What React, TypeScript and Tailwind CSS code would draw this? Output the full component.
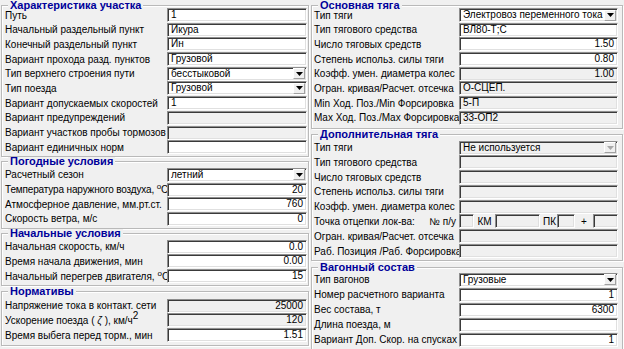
import React from 'react';
import clsx from 'clsx';

type Row =
  | { kind: 'edit'; label: React.ReactNode; value?: string; right?: boolean; gray?: boolean }
  | { kind: 'combo'; label: React.ReactNode; value: string; gray?: boolean }
  | { kind: 'point' };

// windows-ish small text, narrower than Arial 11px
const txt = 'text-[10px]';

const Field: React.FC<{ value?: string; right?: boolean; gray?: boolean; className?: string }> = ({
  value = '',
  right,
  gray,
  className
}) => (
  <div
    className={clsx(
      'flex h-[14px] shrink-0 items-center overflow-hidden whitespace-nowrap border border-t-[#8e8e8e] border-l-[#8e8e8e] border-r-white border-b-white px-[3px] leading-[12px] text-black shadow-[inset_1px_1px_0_#3a3a3a,inset_-1px_-1px_0_#e0e0e0]',
      txt,
      gray ? 'bg-[#f0f0f0]' : 'bg-white',
      right ? 'justify-end' : 'justify-start',
      className
    )}
  >
    {value}
  </div>
);

const Combo: React.FC<{ value: string; gray?: boolean; className?: string }> = ({ value, gray, className }) => (
  <div
    className={clsx(
      'flex h-[14px] shrink-0 items-center border border-t-[#8e8e8e] border-l-[#8e8e8e] border-r-white border-b-white pl-[3px] leading-[12px] text-black shadow-[inset_1px_1px_0_#3a3a3a,inset_-1px_-1px_0_#e0e0e0]',
      txt,
      gray ? 'bg-[#f0f0f0]' : 'bg-white',
      className
    )}
  >
    <span className="flex-1 overflow-hidden whitespace-nowrap">{value}</span>
    <div className="mr-[1px] flex h-[11px] w-[12px] items-center justify-center border border-t-white border-l-white border-r-[#a0a0a0] border-b-[#a0a0a0] bg-[#f0f0f0]">
      <svg width="7" height="4" viewBox="0 0 7 4">
        <path d="M0 0h7L3.5 4z" fill={gray ? '#a8a8a8' : '#000'} />
      </svg>
    </div>
  </div>
);

const Group: React.FC<{ title: string; className?: string; children: React.ReactNode }> = ({
  title,
  className,
  children
}) => (
  <div className={clsx('relative border border-[#b9b9b9] shadow-[inset_1px_1px_0_#fff,1px_1px_0_#fff]', className)}>
    {/* title sits over the etched line */}
    <span className="absolute -top-[5px] left-[6px] bg-[#f0f0f0] px-[2px] text-[11px] font-bold leading-[9px] text-[#00009a]">
      {title}
    </span>
    {children}
  </div>
);

const Rows: React.FC<{ rows: Row[]; labelW: string; fieldW: string; pitch: string; pl: string }> = ({
  rows,
  labelW,
  fieldW,
  pitch,
  pl
}) => (
  <>
    {rows.map((row, i) => {
      if (row.kind === 'point') {
        return (
          <div key={i} className={clsx('flex items-start', pitch, txt)}>
            <div className={clsx('flex h-[14px] shrink-0 items-center justify-between whitespace-nowrap pr-[3px]', labelW, pl)}>
              <span>Точка отцепки лок-ва:</span>
              <span>№ п/у</span>
            </div>
            <Field gray className="w-[15px]" />
            <span className="flex h-[14px] w-[21px] items-center justify-center">КМ</span>
            <Field gray className="w-[45px]" />
            <span className="flex h-[14px] w-[17px] items-center pl-[3px]">ПК</span>
            <Field gray className="w-[18px]" />
            <span className="flex h-[14px] w-[18px] items-center justify-center">+</span>
            <Field gray className="w-[25px]" />
          </div>
        );
      }
      return (
        <div key={i} className={clsx('flex items-start', pitch)}>
          <div className={clsx('flex h-[14px] shrink-0 items-center whitespace-nowrap', txt, labelW, pl)}>
            <span>{row.label}</span>
          </div>
          {row.kind === 'combo' ? (
            <Combo value={row.value} gray={row.gray} className={fieldW} />
          ) : (
            <Field value={row.value} right={row.right} gray={row.gray} className={fieldW} />
          )}
        </div>
      );
    })}
  </>
);

const deg = (
  <>
    <sup className="text-[8px]">o</sup>C
  </>
);

const App: React.FC = () => {
  const section: Row[] = [
    { kind: 'edit', label: 'Путь', value: '1' },
    { kind: 'edit', label: 'Начальный раздельный пункт', value: 'Икура' },
    { kind: 'edit', label: 'Конечный раздельный пункт', value: 'Ин' },
    { kind: 'edit', label: 'Вариант прохода разд. пунктов', value: 'Грузовой' },
    { kind: 'combo', label: 'Тип верхнего строения пути', value: 'бесстыковой' },
    { kind: 'combo', label: 'Тип поезда', value: 'Грузовой' },
    { kind: 'edit', label: 'Вариант допускаемых скоростей', value: '1' },
    { kind: 'edit', label: 'Вариант предупреждений', gray: true },
    { kind: 'edit', label: 'Вариант участков пробы тормозов', gray: true },
    { kind: 'edit', label: 'Вариант единичных норм' }
  ];
  const weather: Row[] = [
    { kind: 'combo', label: 'Расчетный сезон', value: 'летний' },
    {
      kind: 'edit',
      label: <span className="tracking-[-0.15px]">Температура наружного воздуха, {deg}</span>,
      value: '20',
      right: true
    },
    { kind: 'edit', label: 'Атмосферное давление, мм.рт.ст.', value: '760', right: true },
    { kind: 'edit', label: 'Скорость ветра, м/с', value: '0', right: true }
  ];
  const initial: Row[] = [
    { kind: 'edit', label: 'Начальная скорость, км/ч', value: '0.0', right: true },
    { kind: 'edit', label: 'Время начала движения, мин', value: '0.00', right: true },
    { kind: 'edit', label: <>Начальный перегрев двигателя, {deg}</>, value: '15', right: true }
  ];
  const norms: Row[] = [
    { kind: 'edit', label: 'Напряжение тока в контакт. сети', value: '25000', right: true, gray: true },
    {
      kind: 'edit',
      label: (
        <>
          Ускорение поезда ( <i>ζ</i> ), км/ч<sup className="text-[10px]">2</sup>
        </>
      ),
      value: '120',
      right: true,
      gray: true
    },
    { kind: 'edit', label: 'Время выбега перед торм., мин', value: '1.51', right: true }
  ];
  const mainTraction: Row[] = [
    { kind: 'combo', label: 'Тип тяги', value: 'Электровоз переменного тока' },
    { kind: 'edit', label: 'Тип тягового средства', value: 'ВЛ80-Т;С' },
    { kind: 'edit', label: 'Число тяговых средств', value: '1.50', right: true },
    { kind: 'edit', label: 'Степень использ. силы тяги', value: '0.80', right: true },
    { kind: 'edit', label: 'Коэфф. умен. диаметра колес', value: '1.00', right: true, gray: true },
    { kind: 'edit', label: 'Огран. кривая/Расчет. отсечка', value: 'О-СЦЕП.', gray: true },
    { kind: 'edit', label: 'Min Ход. Поз./Min Форсировка', value: '5-П', gray: true },
    { kind: 'edit', label: 'Max Ход. Поз./Max Форсировка', value: '33-ОП2', gray: true }
  ];
  const extraTraction: Row[] = [
    { kind: 'combo', label: 'Тип тяги', value: 'Не используется', gray: true },
    { kind: 'edit', label: 'Тип тягового средства', gray: true },
    { kind: 'edit', label: 'Число тяговых средств', gray: true },
    { kind: 'edit', label: 'Степень использ. силы тяги', gray: true },
    { kind: 'edit', label: 'Коэфф. умен. диаметра колес', gray: true },
    { kind: 'point' },
    { kind: 'edit', label: 'Огран. кривая/Расчет. отсечка', gray: true },
    { kind: 'edit', label: 'Раб. Позиция /Раб. Форсировка', gray: true }
  ];
  const wagons: Row[] = [
    { kind: 'combo', label: 'Тип вагонов', value: 'Грузовые' },
    { kind: 'edit', label: 'Номер расчетного варианта', value: '1', right: true },
    { kind: 'edit', label: 'Вес состава, т', value: '6300', right: true },
    { kind: 'edit', label: 'Длина поезда, м' },
    { kind: 'edit', label: 'Вариант Доп. Скор. на спусках', value: '1', right: true }
  ];

  const left = { labelW: 'w-[165px]', fieldW: 'w-[140px]', pl: 'pl-[3px]' };
  const right = { labelW: 'w-[147px]', fieldW: 'w-[159px]', pl: 'pl-[2px]' };

  return (
    <div
      className="flex h-[349px] w-[624px] overflow-hidden bg-[#f0f0f0] text-black"
      style={{ fontFamily: '"Liberation Sans", Arial, sans-serif' }}
    >
      <div className="flex w-[310px] shrink-0 flex-col">
        <Group title="Характеристика участка" className="ml-[1px] mt-[5px] w-[308px] pb-[1px] pt-[2px]">
          <Rows rows={section} pitch="h-[14.7px]" {...left} />
        </Group>
        <Group title="Погодные условия" className="ml-[1px] mt-[4px] w-[308px] pb-[1px] pt-[6px]">
          <Rows rows={weather} pitch="h-[14.7px]" {...left} />
        </Group>
        <Group title="Начальные условия" className="ml-[1px] mt-[4px] w-[308px] pb-[1px] pt-[6px]">
          <Rows rows={initial} pitch="h-[14.7px]" {...left} />
        </Group>
        <Group title="Нормативы" className="ml-[1px] mt-[5px] w-[308px] pb-[2px] pt-[7px]">
          <Rows rows={norms} pitch="h-[14.7px]" {...left} />
        </Group>
      </div>
      <div className="flex w-[314px] shrink-0 flex-col">
        <Group title="Основная тяга" className="ml-[1px] mt-[5px] w-[312px] pb-[2px] pt-[2px]">
          <Rows rows={mainTraction} pitch="h-[14.7px]" {...right} />
        </Group>
        <Group title="Дополнительная тяга" className="ml-[1px] mt-[5px] w-[312px] pb-[1px] pt-[6px]">
          <Rows rows={extraTraction} pitch="h-[14.8px]" {...right} />
        </Group>
        <Group title="Вагонный состав" className="ml-[1px] mt-[6px] w-[312px] pb-[1px] pt-[5px]">
          <Rows rows={wagons} pitch="h-[15px]" {...right} />
        </Group>
      </div>
    </div>
  );
};

export default App;
